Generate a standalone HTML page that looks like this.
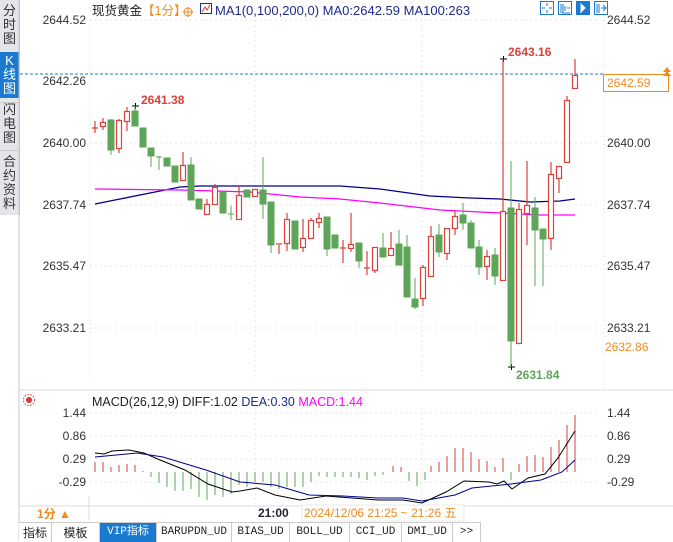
<!DOCTYPE html>
<html><head><meta charset="utf-8"><style>
body{margin:0;width:673px;height:541px;overflow:hidden;background:#fff;font-family:"Liberation Sans","Noto Sans CJK SC",sans-serif;position:relative}
.side{position:absolute;left:0;top:0;width:19px;height:215px;background:#e4e5ea;border-right:1px solid #c8c8cc}
.side div{position:absolute;left:0;width:19px;text-align:center;font-size:13px;line-height:14px;color:#333}
.tabs{position:absolute;left:19px;top:522px;height:19px;width:462px;display:flex;font-size:12px;border-top:1px solid #ccc;background:#fff}
.tabs div{border-right:1px solid #ccc;text-align:center;line-height:19px;color:#222;font-family:"Liberation Mono","Noto Sans CJK SC",monospace;font-size:11px}
</style></head><body>
<div class="side">
<div style="top:4px">分<br>时<br>图</div>
<div style="top:52px;height:44px;background:#1a7ad0;color:#fff;padding-top:2px">K<br>线<br>图</div>
<div style="top:102px;border-top:1px solid #ccc">闪<br>电<br>图</div>
<div style="top:150px;border-top:1px solid #ccc;padding-top:4px">合<br>约<br>资<br>料</div>
</div>
<svg width="673" height="541" style="position:absolute;left:0;top:0" font-family="Liberation Sans, Noto Sans CJK SC, sans-serif">
<line x1="19" y1="390" x2="673" y2="390" stroke="#ddd"/>
<line x1="90" y1="20" x2="90" y2="380" stroke="#ddd" stroke-dasharray="1,3"/>
<line x1="604" y1="20" x2="604" y2="390" stroke="#ddd" stroke-dasharray="1,3"/>
<g stroke="#e4e4e4" stroke-dasharray="2,3">
<line x1="90" y1="20" x2="600" y2="20"/><line x1="90" y1="143" x2="600" y2="143"/><line x1="90" y1="205" x2="600" y2="205"/><line x1="90" y1="266" x2="600" y2="266"/><line x1="90" y1="328" x2="600" y2="328"/>
<line x1="255" y1="20" x2="255" y2="380"/><line x1="422" y1="20" x2="422" y2="380"/>
<line x1="90" y1="413" x2="600" y2="413"/><line x1="90" y1="436" x2="600" y2="436"/><line x1="90" y1="459" x2="600" y2="459"/><line x1="90" y1="482" x2="600" y2="482"/>
<line x1="255" y1="408" x2="255" y2="505"/><line x1="422" y1="408" x2="422" y2="505"/>
</g>
<g font-size="12" fill="#333" text-anchor="end">
<text x="86" y="24">2644.52</text><text x="86" y="85">2642.26</text><text x="86" y="147">2640.00</text><text x="86" y="209">2637.74</text><text x="86" y="270">2635.47</text><text x="86" y="332">2633.21</text>
<text x="86" y="417">1.44</text><text x="86" y="440">0.86</text><text x="86" y="463">0.29</text><text x="86" y="486">-0.29</text>
</g>
<g font-size="12" fill="#333">
<text x="607" y="24">2644.52</text><text x="607" y="147">2640.00</text><text x="607" y="209">2637.74</text><text x="607" y="270">2635.47</text><text x="607" y="332">2633.21</text>
<text x="607" y="417">1.44</text><text x="607" y="440">0.86</text><text x="607" y="463">0.29</text><text x="607" y="486">-0.29</text>
<text x="605" y="351" fill="#f08a1c">2632.86</text>
</g>
<rect x="603.5" y="74.5" width="65" height="17" fill="#fff" stroke="#f08a1c"/>
<text x="607" y="87" font-size="12" fill="#f08a1c">2642.59</text>
<path d="M663 72 L667 67 L671 72Z M663 76 L667 71 L671 76Z" fill="#f08a1c"/>
<line x1="20" y1="74" x2="603" y2="74" stroke="#1a7ad0" stroke-dasharray="3,2"/>
<text x="92" y="15" font-size="12.5" fill="#222">现货黄金</text>
<text x="142" y="15" font-size="12.5" fill="#f08a1c">【1分】</text>
<circle cx="188" cy="12" r="4" fill="none" stroke="#f08a1c"/><line x1="183" y1="12" x2="193" y2="12" stroke="#f08a1c"/><line x1="188" y1="7" x2="188" y2="17" stroke="#f08a1c"/>
<rect x="200.5" y="3.5" width="11" height="10" fill="#fff" stroke="#1e2a8c"/><path d="M202 12 L205 7 L207 10 L210 5" stroke="#d33" fill="none"/>
<text x="215" y="15" font-size="13" fill="#1e2a8c">MA1(0,100,200,0)  MA0:2642.59  MA100:263</text>
<g stroke="#1a7ad0" fill="none">
<rect x="540.5" y="1.5" width="13" height="13"/><rect x="558.5" y="1.5" width="13" height="13"/><rect x="576.5" y="1.5" width="13" height="13" fill="#1a7ad0"/><rect x="594.5" y="1.5" width="13" height="13"/>
<path d="M547 3v3M547 10v3M542 8h3M549 8h3M561 4v9M563 4v9M565 6v5M567 8h3M562 13h8"/>
<path d="M585 8l-4-4v8z M581 4v9" stroke="#fff" fill="#fff"/>
<path d="M597 4v9M599 4v9M601 8h5M603 5l3 3l-3 3"/>
</g>
<text x="508" y="56" font-size="12" font-weight="bold" fill="#d9413a">2643.16</text>
<text x="141" y="104" font-size="12" font-weight="bold" fill="#d9413a">2641.38</text>
<text x="516" y="379" font-size="12" font-weight="bold" fill="#5ea55a">2631.84</text>
<path d="M132 106h7M135.5 103v6M500 59h7M503.5 56v6M508 367h7M511.5 364v6" stroke="#000"/>
<polyline fill="none" stroke="#000088" stroke-width="1.3" points="95,204 120,199 150,193 180,187 200,186 340,186 380,189 430,196 470,198 500,199 530,202 560,201 575,199"/>
<polyline fill="none" stroke="#ff00ff" stroke-width="1.3" points="95,189 180,190 250,192 300,197 340,199 380,203 440,210 500,213 540,215 575,215"/>
<g stroke="#d9413a" fill="#fff" stroke-width="1.2">
<path d="M95 121v12M92 128h6M103 118v12M119 119v34M127 107v24M183 152v29M207 199v16M215 184v21M239 185v35M279 245v9M276 244h6M287 213v38M303 219v33M311 218v20M319 213v15M343 240v23M340 248h6M351 213v39M367 251v24M364 268h6M375 247v26M391 232v23M423 265v41M431 226v50M447 228v32M455 210v25M487 250v30M503 59v221M519 203v140M527 161v84M551 162v88M559 166v27M567 96v66M575 59v29"/>
<rect x="100.5" y="122.5" width="5" height="4"/><rect x="116.5" y="120.5" width="5" height="28"/><rect x="124.5" y="111.5" width="5" height="10"/><rect x="180.5" y="165.5" width="5" height="15"/><rect x="204.5" y="204.5" width="5" height="10"/><rect x="212.5" y="187.5" width="5" height="17"/><rect x="236.5" y="195.5" width="5" height="24"/><rect x="252.5" y="189.5" width="5" height="7"/><rect x="284.5" y="219.5" width="5" height="24"/><rect x="300.5" y="238.5" width="5" height="9"/><rect x="308.5" y="220.5" width="5" height="18"/><rect x="316.5" y="218.5" width="5" height="4"/><rect x="348.5" y="244.5" width="5" height="4"/><rect x="372.5" y="247.5" width="5" height="23"/><rect x="388.5" y="248.5" width="5" height="7"/><rect x="420.5" y="267.5" width="5" height="31"/><rect x="428.5" y="236.5" width="5" height="40"/><rect x="444.5" y="228.5" width="5" height="25"/><rect x="452.5" y="216.5" width="5" height="12"/><rect x="484.5" y="256.5" width="5" height="10"/><rect x="500.5" y="211.5" width="5" height="69"/><rect x="516.5" y="209.5" width="5" height="134"/><rect x="524.5" y="205.5" width="5" height="8"/><rect x="548.5" y="174.5" width="5" height="64"/><rect x="556.5" y="166.5" width="5" height="12"/><rect x="564.5" y="100.5" width="5" height="62"/><rect x="572.5" y="75.5" width="5" height="13"/>
</g>
<g stroke="#5ea55a" fill="#5ea55a">
<path d="M111 119v36M135 106v20M151 148v19M159 156v14M156 157h6M191 157v43M231 206v14M228 214h6M263 157v62M271 202v51M327 217v39M359 243v25M383 233v24M399 230v35M407 235v62M415 278v31M439 224v33M463 203v27M471 220v28M479 240v35M495 248v37M511 161v206M535 197v89M543 229v57"/>
<rect x="108" y="120" width="6" height="30"/><rect x="132" y="111" width="6" height="15"/><rect x="140" y="128" width="6" height="19"/><rect x="148" y="148" width="6" height="8"/><rect x="164" y="158" width="6" height="8"/><rect x="172" y="166" width="6" height="16"/><rect x="188" y="165" width="6" height="35"/><rect x="196" y="199" width="6" height="10"/><rect x="220" y="192" width="6" height="21"/><rect x="244" y="190" width="6" height="7"/><rect x="260" y="190" width="6" height="14"/><rect x="268" y="202" width="6" height="43"/><rect x="292" y="221" width="6" height="28"/><rect x="324" y="217" width="6" height="32"/><rect x="332" y="235" width="6" height="13"/><rect x="356" y="243" width="6" height="18"/><rect x="380" y="248" width="6" height="9"/><rect x="396" y="244" width="6" height="21"/><rect x="404" y="247" width="6" height="50"/><rect x="412" y="299" width="6" height="8"/><rect x="436" y="235" width="6" height="17"/><rect x="460" y="215" width="6" height="8"/><rect x="468" y="223" width="6" height="25"/><rect x="476" y="247" width="6" height="20"/><rect x="492" y="255" width="6" height="21"/><rect x="508" y="208" width="6" height="133"/><rect x="532" y="208" width="6" height="22"/><rect x="540" y="229" width="6" height="10"/>
</g>
<circle cx="29" cy="400" r="3" fill="#d33"/><circle cx="29" cy="400" r="5.5" fill="none" stroke="#d33" stroke-dasharray="1.5,1.5"/>
<text x="92" y="406" font-size="12.5" fill="#222">MACD(26,12,9) DIFF:1.02 <tspan fill="#1e2a8c">DEA:0.30</tspan> <tspan fill="#ff00ff">MACD:1.44</tspan></text>
<g stroke-width="1">
<path stroke="#d9413a" d="M95 472v-10M103 472v-10M111 472v-5M119 472v-7M127 472v-8M135 472v-7M143 472v-1M393 472v-6M401 472v-5M431 472v-6M439 472v-10M447 472v-16M455 472v-24M463 472v-24M471 472v-20M479 472v-13M487 472v-11M495 472v-5M503 472v-14M519 472v-8M527 472v-16M535 472v-17M543 472v-15M551 472v-25M559 472v-32M567 472v-47M575 472v-57"/>
<path stroke="#5ea55a" d="M151 472v5M159 472v11M167 472v15M175 472v19M183 472v19M191 472v17M199 472v25M207 472v28M215 472v23M223 472v25M231 472v22M239 472v13M247 472v15M255 472v10M263 472v10M271 472v15M279 472v17M287 472v15M295 472v15M303 472v15M311 472v10M319 472v4M327 472v5M335 472v5M343 472v5M351 472v5M359 472v6M367 472v8M375 472v4M383 472v3M409 472v9M417 472v14M425 472v8M511 472v8"/>
</g>
<polyline fill="none" stroke="#000" points="95,453 104,454 112,451 129,450 144,453 160,460 185,470 208,484 232,492 240,491 257,488 275,495 300,500 326,496 352,498 378,500 403,500 422,503 446,492 464,481 489,482 497,484 504,481 512,489 528,478 545,474 558,458 575,431"/>
<polyline fill="none" stroke="#000088" points="95,457 137,453 163,457 206,470 240,482 275,485 309,495 343,496 378,498 403,498 422,501 455,495 472,488 511,484 541,480 562,472 575,460"/>
<line x1="19" y1="506" x2="673" y2="506" stroke="#ddd"/>
<line x1="89" y1="496" x2="89" y2="521" stroke="#ddd"/>
<text x="37" y="518" font-size="12" font-weight="bold" fill="#f08a1c">1分 ▲</text>
<text x="258" y="517" font-size="12" font-weight="bold" fill="#223">21:00</text>
<rect x="302" y="505" width="162" height="16" fill="#fff" stroke="#e8e8e8"/>
<text x="304" y="517" font-size="12" fill="#f08a1c">2024/12/06 21:25 ~ 21:26 五</text>
<line x1="19" y1="0" x2="19" y2="541" stroke="#c8c8cc"/>
</svg>
<div class="tabs">
<div style="width:32px;font-family:'Noto Sans CJK SC',sans-serif;font-size:12px">指标</div>
<div style="width:47px;font-family:'Noto Sans CJK SC',sans-serif;font-size:12px">模板</div>
<div style="width:56px;background:#1a7ad0;color:#fff">VIP指标</div>
<div style="width:74px">BARUPDN_UD</div>
<div style="width:57px">BIAS_UD</div>
<div style="width:59px">BOLL_UD</div>
<div style="width:51px">CCI_UD</div>
<div style="width:50px">DMI_UD</div>
<div style="width:27px">&gt;&gt;</div>
</div>
</body></html>
